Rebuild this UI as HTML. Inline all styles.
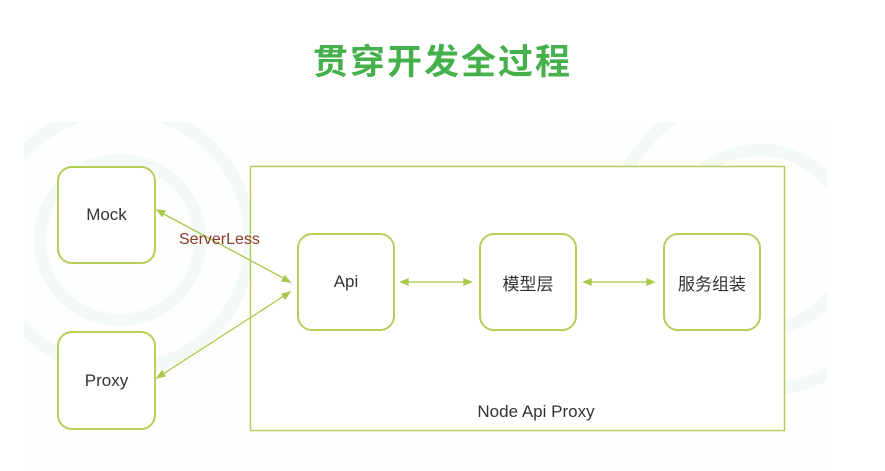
<!DOCTYPE html>
<html><head><meta charset="utf-8"><style>
body{margin:0;width:885px;height:471px;background:#fff;position:relative;overflow:hidden;font-family:"Liberation Sans","Noto Sans CJK SC",sans-serif}
.t{position:absolute;left:0;width:885px;top:34px;text-align:center;font-size:35px;font-weight:bold;color:#45b04c;letter-spacing:2px}
.bx{position:absolute;border:2px solid #b5cf5c;border-radius:15px;display:flex;align-items:center;justify-content:center;font-size:17px;color:#333;background:#fff;box-sizing:border-box}
</style></head><body>
<div class="t">贯穿开发全过程</div>
<svg style="position:absolute;left:0;top:0" width="885" height="471">
<defs><clipPath id="c"><rect x="24" y="122" width="803" height="349"/></clipPath></defs>
<rect x="24" y="122" width="803" height="349" fill="#fdfefd"/>
<g fill="none" stroke="#f3f9f5" stroke-width="12" clip-path="url(#c)">
<circle cx="120" cy="240" r="80"/><circle cx="120" cy="240" r="130"/>
<circle cx="760" cy="240" r="90"/><circle cx="760" cy="240" r="150"/>
</g>
<rect x="250.5" y="166.5" width="534" height="264" fill="#fff" stroke="#b5cf5c" stroke-width="1.5"/>
<g stroke="#a8c94a" stroke-width="1.3" fill="#a8c94a">
<line x1="160" y1="212" x2="287" y2="280"/>
<polygon points="157,210 165,211 162,216"/><polygon points="290,282 282,281 285,276"/>
<line x1="160" y1="376" x2="287" y2="294"/>
<polygon points="157,378 162,371 165,376"/><polygon points="290,292 285,299 282,294"/>
<line x1="404" y1="282" x2="468" y2="282"/>
<polygon points="401,282 408,279 408,285"/><polygon points="471,282 464,279 464,285"/>
<line x1="587" y1="282" x2="651" y2="282"/>
<polygon points="584,282 591,279 591,285"/><polygon points="654,282 647,279 647,285"/>
</g>
<text x="179" y="244" font-family="Liberation Sans" font-size="16" fill="#8b3a2a">ServerLess</text>
<text x="536" y="417" text-anchor="middle" font-family="Liberation Sans" font-size="17" fill="#333">Node Api Proxy</text>
</svg>
<div class="bx" style="left:57px;top:166px;width:99px;height:98px">Mock</div>
<div class="bx" style="left:57px;top:331px;width:99px;height:99px">Proxy</div>
<div class="bx" style="left:297px;top:233px;width:98px;height:98px">Api</div>
<div class="bx" style="left:479px;top:233px;width:98px;height:98px">模型层</div>
<div class="bx" style="left:663px;top:233px;width:98px;height:98px">服务组装</div>
</body></html>
